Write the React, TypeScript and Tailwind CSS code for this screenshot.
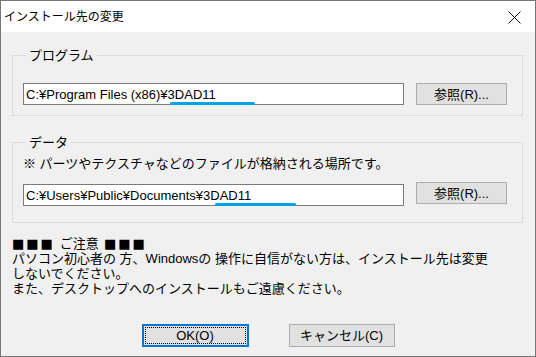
import React from "react";

// Windows-style "change install location" dialog.

const font = "font-['Liberation_Sans','Noto_Sans_CJK_JP',sans-serif]";

function Underline({ left, width }: { left: number; width: number }) {
  return (
    <span
      aria-hidden
      className="absolute top-[19px] h-[3px] rounded-full bg-[#00a2e8]"
      style={{ left, width }}
    />
  );
}

function PathRow({
  value,
  markLeft,
  markWidth,
  buttonOffset = 0,
}: {
  value: string;
  markLeft: number;
  markWidth: number;
  buttonOffset?: number;
}) {
  return (
    <div className="flex items-start gap-[12px]">
      <div className="relative">
        <div className="flex h-[22px] w-[381px] items-center border border-[#7a7a7a] bg-white pl-[2px] text-[13px] leading-none">
          {value}
        </div>
        <Underline left={markLeft} width={markWidth} />
      </div>
      <button
        type="button"
        className="flex h-[22px] w-[91px] items-center justify-center border border-[#adadad] bg-[#e1e1e1] text-[13px] leading-none"
        style={{ marginTop: buttonOffset }}
      >
        参照(R)...
      </button>
    </div>
  );
}

export default function App() {
  return (
    <div className={`${font} h-[357px] w-[536px] border border-[#777777] bg-[#f0f0f0] text-black`}>
      <div className="flex h-[31px] items-center justify-between bg-white pl-[3px] pr-[14px]">
        <span className="text-[12px] leading-none">インストール先の変更</span>
        <svg width="13" height="13" viewBox="0 0 13 13" className="mt-[1px]">
          <path d="M0.5 0.5 L12.5 12.5 M12.5 0.5 L0.5 12.5" stroke="#111" strokeWidth="1" />
        </svg>
      </div>

      <div className="flex flex-col px-[11px] pt-[16px]">
        <fieldset className="h-[68px] w-[511px] border border-[#dcdcdc] px-[10px]">
          <legend className="ml-[3px] px-[3px] text-[13px] leading-[15px]">プログラム</legend>
          <div className="pt-[20px]">
            <PathRow value="C:¥Program Files (x86)¥3DAD11" markLeft={147} markWidth={85} />
          </div>
        </fieldset>

        <fieldset className="mt-[19px] h-[88px] w-[511px] border border-[#dcdcdc] px-[10px]">
          <legend className="ml-[3px] px-[3px] text-[13px] leading-[15px]">データ</legend>
          <p className="mt-[6px] text-[13px] leading-[16px]">※ パーツやテクスチャなどのファイルが格納される場所です。</p>
          <div className="mt-[12px]">
            <PathRow
              value="C:¥Users¥Public¥Documents¥3DAD11"
              markLeft={192}
              markWidth={81}
              buttonOffset={-2}
            />
          </div>
        </fieldset>

        <div className="mt-[13px] flex flex-col text-[13px] leading-[15px]">
          <p className="flex items-center gap-[5px]">
            <span className="font-['DejaVu_Sans'] tracking-[2px]">■■■</span>
            <span>ご注意</span>
            <span className="font-['DejaVu_Sans'] tracking-[2px]">■■■</span>
          </p>
          <p>
            パソコン初心者の 方、Windowsの 操作に自信がない方は、インストール先は変更
            <br />
            しないでください。
          </p>
          <p>また、デスクトップへのインストールもご遠慮ください。</p>
        </div>

        <div className="mt-[28px] flex justify-center gap-[40px]">
          <button
            type="button"
            className="h-[23px] w-[107px] border-2 border-[#0078d7] bg-[#e1e1e1] p-[1px] text-[13px] leading-none"
          >
            <span className="flex h-full w-full items-center justify-center border border-dotted border-black">
              OK(O)
            </span>
          </button>
          <button
            type="button"
            className="flex h-[23px] w-[106px] items-center justify-center border border-[#adadad] bg-[#e1e1e1] text-[13px] leading-none"
          >
            キャンセル(C)
          </button>
        </div>
      </div>
    </div>
  );
}
